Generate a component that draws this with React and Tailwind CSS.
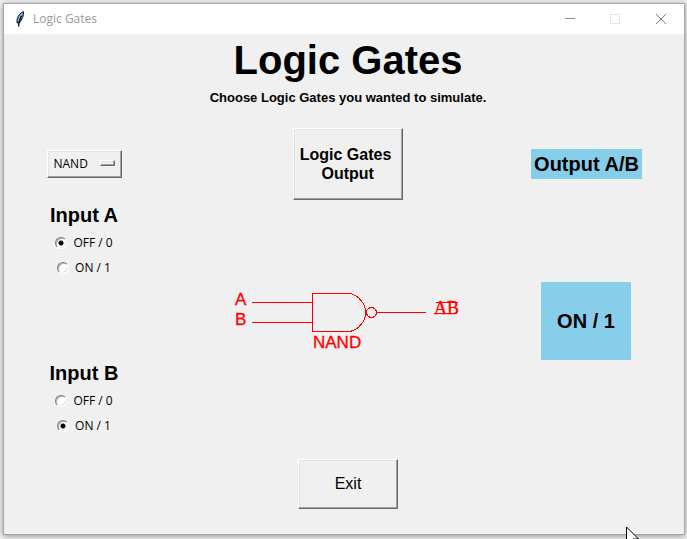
import { useState } from "react";

const uiFont = "font-['Open_Sans','Noto_Sans',sans-serif]";
const raised =
  "border border-t-white border-l-white border-r-[#696969] border-b-[#696969] shadow-[inset_-1px_-1px_0_#a0a0a0,inset_1px_1px_0_#e3e3e3]";

function TitleBar() {
  return (
    <header className="flex h-[30px] items-center bg-white pl-[10px]">
      <svg width="13" height="18" viewBox="0 0 13 18" aria-hidden="true">
        <path d="M9.500 1.500 C6.500 2.500 3.500 6 3 10 L3 13 L5.500 12.500 C8 10 10 5.500 9.500 1.500 Z" fill="#4a86cf" stroke="#16202e" strokeWidth="1" />
        <path d="M8 3.500 C6 6 5 8 4.500 11" stroke="#a9cdf5" strokeWidth="1" fill="none" />
        <path d="M7.500 6 C5.500 9 5 12 4.500 16.500" stroke="#000" strokeWidth="1.3" fill="none" />
      </svg>
      <span className={`ml-[6px] flex-1 text-[12px] leading-4 text-[#999999] ${uiFont}`}>Logic Gates</span>
      <button aria-label="Minimize" className="flex h-full w-[45px] items-center justify-center">
        <svg width="10" height="10" shapeRendering="crispEdges"><path d="M0 4.500H10" stroke="#8c8c8c" /></svg>
      </button>
      <button aria-label="Maximize" disabled className="flex h-full w-[45px] items-center justify-center">
        <svg width="10" height="10" shapeRendering="crispEdges"><rect x=".5" y=".5" width="9" height="9" fill="none" stroke="#e6e6e6" /></svg>
      </button>
      <button aria-label="Close" className="flex h-full w-[47px] items-center justify-center">
        <svg width="10" height="10"><path d="M0 0L10 10M10 0L0 10" stroke="#7c7c7c" /></svg>
      </button>
    </header>
  );
}

function Radio({ name, label, checked, onChange }) {
  return (
    <label className={`flex h-[25px] items-center gap-[6px] text-[12px] leading-4 ${uiFont}`}>
      <input
        type="radio"
        name={name}
        checked={checked}
        onChange={onChange}
        className="size-[12px] appearance-none rounded-full border border-t-[#7a7a7a] border-l-[#7a7a7a] border-r-white border-b-white bg-white shadow-[inset_1px_1px_0_#b5b5b5,inset_-1px_-1px_0_#e3e3e3] checked:bg-[radial-gradient(circle,#000_2px,#fff_3px)]"
      />
      {label}
    </label>
  );
}

function InputGroup({ title, name, value, onChange }) {
  return (
    <fieldset className="flex flex-col items-center">
      <legend className="mx-auto mb-[3px] text-[20px] leading-6 font-bold">{title}</legend>
      <div className="flex flex-col items-center">
        <Radio name={name} label="OFF / 0" checked={value === 0} onChange={() => onChange(0)} />
        <Radio name={name} label="ON / 1" checked={value === 1} onChange={() => onChange(1)} />
      </div>
    </fieldset>
  );
}

function NandDiagram() {
  return (
    <svg width="228" height="62" viewBox="234 289 228 62" role="img" aria-label="NAND gate" shapeRendering="crispEdges">
      <g fill="none" stroke="#ff0000" strokeWidth="1">
        <path d="M252 301.500H312M252 321.500H312M377 311.500H426" />
        <path d="M350 292.500H312.500V330.500H350C359 328.500 365.500 320 366 311.500C365.500 303 359 294.500 350 292.500" />
        <circle cx="371.500" cy="311.500" r="5" />
        <path d="M436 301.500H458M434 312.500H444M447 312.500H457" />
      </g>
      <g fill="#ff0000" stroke="#ff0000" strokeWidth="0.3" fontSize="17" fontFamily="'Liberation Sans', sans-serif">
        <text x="235" y="304">A</text>
        <text x="235" y="324">B</text>
        <text x="313" y="347">NAND</text>
        <text x="434" y="313" fontSize="18" fontFamily="'Liberation Serif', serif">AB</text>
      </g>
    </svg>
  );
}

export default function App() {
  const [a, setA] = useState(0);
  const [b, setB] = useState(1);
  const out = a && b ? "OFF / 0" : "ON / 1";
  return (
    <div className="relative min-h-screen overflow-hidden bg-[#f0f0f0] pt-[3px] pr-[2px] pb-[4px] pl-[3px] font-['Liberation_Sans',Arial,sans-serif] text-black">
      <div className="border border-[#a6a6a6] bg-[#f0f0f0] shadow-[0_1px_6px_rgba(0,0,0,0.4)]">
        <TitleBar />
        <main className="pt-[2px] pb-[25px]">
          <h1 className="pl-2 text-center text-[40px] leading-12 font-bold">Logic Gates</h1>
          <p className="mt-1 pl-2 text-center text-[13px] leading-5 font-bold">Choose Logic Gates you wanted to simulate.</p>
          <div className="mt-5 grid grid-cols-[160fr_367fr_153fr] grid-rows-[72px_auto] items-center justify-items-center gap-y-[3px]">
            <div className="relative">
              <select
                aria-label="Gate"
                defaultValue="NAND"
                className={`block h-7 w-[75px] appearance-none rounded-none bg-[#f0f0f0] pl-[6px] text-[12px] ${uiFont} ${raised}`}
              >
                <option>AND</option>
                <option>OR</option>
                <option>NAND</option>
                <option>NOR</option>
                <option>XOR</option>
              </select>
              <span className={`pointer-events-none absolute top-[10px] right-[7px] h-[6px] w-[15px] bg-[#f0f0f0] ${raised}`} />
            </div>
            <button className={`h-[72px] w-[110px] pr-1 text-[16px] leading-[19px] font-bold ${raised}`}>
              Logic Gates
              <br />
              &nbsp;Output
            </button>
            <div className="w-[111px] justify-self-start bg-[#87ceeb] text-center text-[20px] leading-[30px] font-bold">Output A/B</div>

            <div className="flex flex-col gap-[81px]">
              <InputGroup title="Input A" name="a" value={a} onChange={setA} />
              <InputGroup title="Input B" name="b" value={b} onChange={setB} />
            </div>
            <NandDiagram />
            <div className="flex w-[110px] justify-center justify-self-start">
              <output className="w-[90px] bg-[#87ceeb] text-center text-[20px] leading-[78px] font-bold">{out}</output>
            </div>
          </div>
          <div className="mt-[21px] flex justify-center pl-2">
            <button className={`h-[50px] w-[100px] text-[16px] ${raised}`}>Exit</button>
          </div>
        </main>
      </div>
      <svg className="absolute top-[526px] left-[626px]" width="13" height="20" viewBox="0 0 13 20" aria-hidden="true">
        <path d="M.5 1V18L4.500 14L7 19.500L9.500 18.500L7 13H12.500Z" fill="#fff" stroke="#000" />
      </svg>
    </div>
  );
}
